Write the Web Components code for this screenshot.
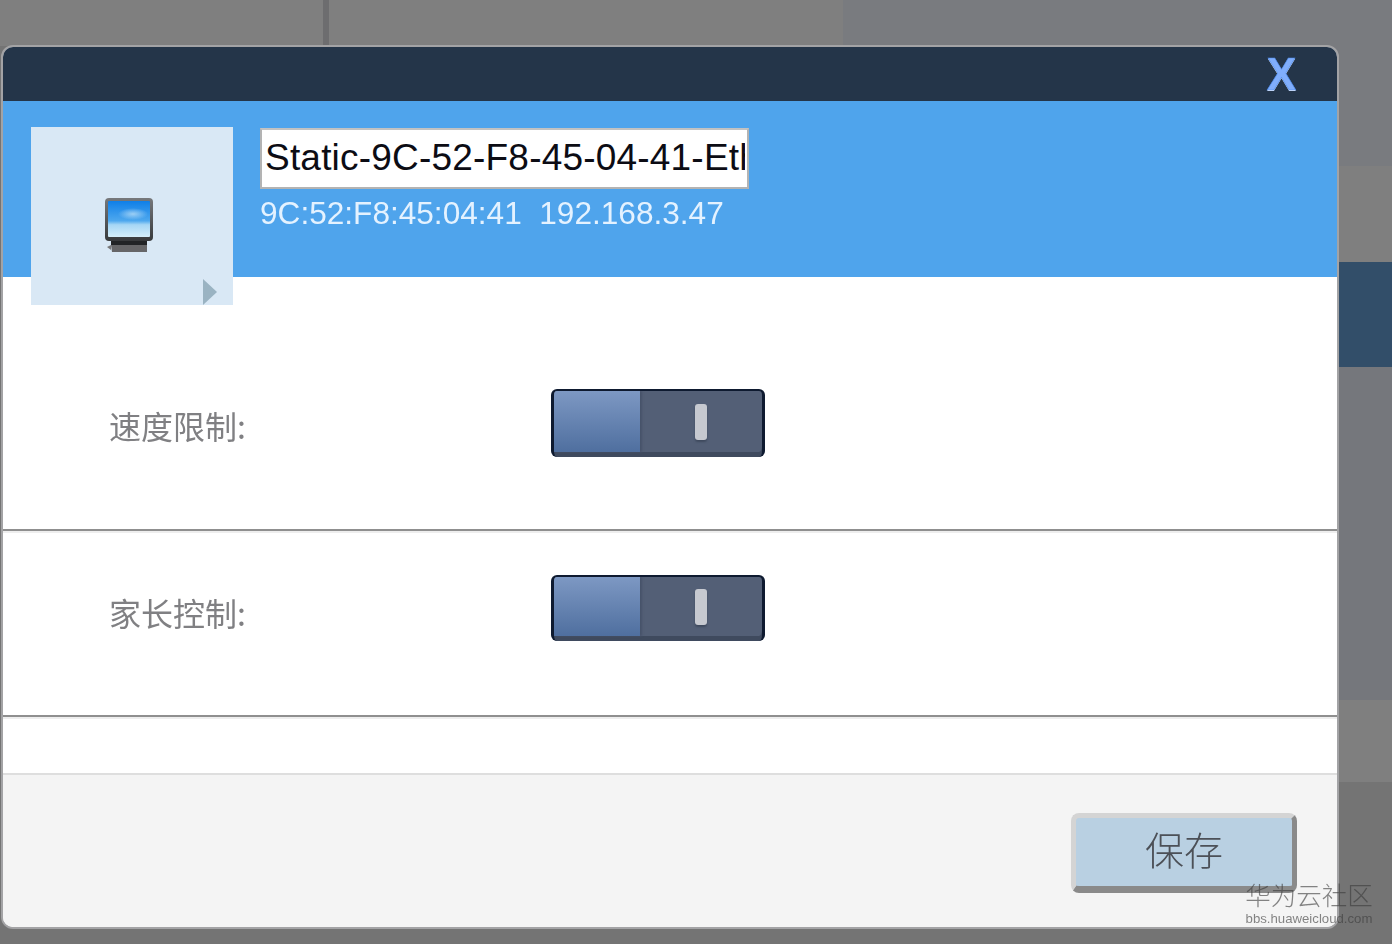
<!DOCTYPE html>
<html lang="zh"><head><meta charset="utf-8"><title>设备设置</title>
<style>
html,body{margin:0;padding:0;width:1392px;height:944px;overflow:hidden;background:#767676}
body{font-family:"Liberation Sans","Noto Sans CJK SC",sans-serif}
</style></head><body>
<template id="t-backdrop"><style>
:host{display:grid;grid-template-columns:323px 6px 514px 1fr;width:1392px;height:944px;background:#747474}
.a,.b,.c{height:46px}
.a{background:#7f7f7f}.b{background:#6d6d6f}.c{background:#7f7f7f}
.d{display:flex;flex-direction:column}
.d>div{flex:none}
.r0{height:166px;background:#797b7f}
.r1{height:96px;background:#7f7f7f}
.r2{height:105px;background:#324e69}
.r3{height:333px;background:#75777c}
.r4{height:82px;background:#7f7f7f}
</style><div class="a"></div><div class="b"></div><div class="c"></div>
<div class="d"><div class="r0"></div><div class="r1"></div><div class="r2"></div><div class="r3"></div><div class="r4"></div></div></template>

<template id="t-dialog"><style>
:host{position:absolute;left:1px;top:45px;width:1338px;height:884px;box-sizing:border-box;border:2px solid #a3a3a5;border-radius:12px;background:#fff;display:flex;flex-direction:column;overflow:hidden;filter:blur(.55px)}
</style><slot></slot></template>

<template id="t-titlebar"><style>
:host{display:flex;justify-content:flex-end;align-items:center;height:54px;background:#243549;flex:none;padding-right:42px;box-sizing:border-box}
.x{font:bold 47px/54px "Liberation Sans",sans-serif;color:#80aefc;-webkit-text-stroke:.6px #4f8cec;text-shadow:0 1px 0 #e6eefc;transform:scaleX(.94);display:block;width:29px;text-align:center}
</style><span class="x">X</span></template>

<template id="t-hostband"><style>
:host{display:flex;height:176px;background:#4fa4ec;flex:none;padding:26px 0 0 28px;box-sizing:border-box;gap:27px;align-items:flex-start;overflow:visible}
.av{position:relative;z-index:2;width:202px;height:178px;background:#d9e8f5;flex:none;display:grid;place-items:center}
.av svg.pc{width:52px;height:58px;margin:20px 6px 0 0}
.arrow{position:absolute;right:16px;bottom:0;width:14px;height:26px}
.tx{display:flex;flex-direction:column;padding-top:1px}
.inp{width:489px;height:61px;box-sizing:border-box;border:2px solid #b3b3b3;border-top-color:#c2c2c2;background:#fff;color:#0c0c14;font-size:37px;letter-spacing:.2px;line-height:56px;padding-left:3px;padding-right:2px;overflow:hidden;white-space:nowrap}
.clip{display:block;overflow:hidden}
.sub{font-size:31.6px;line-height:40px;margin-top:4px;color:#e4f2ff;white-space:pre}
</style>
<div class="av">
<svg class="pc" viewBox="0 0 52 58"><defs><linearGradient id="s" x1="0" y1="0" x2="0" y2="1"><stop offset="0" stop-color="#0f7fe8"/><stop offset=".55" stop-color="#4ea8ee"/><stop offset=".66" stop-color="#a5d6f5"/><stop offset="1" stop-color="#d5eefa"/></linearGradient><linearGradient id="b" x1="0" y1="0" x2="0" y2="1"><stop offset="0" stop-color="#77797c"/><stop offset="1" stop-color="#37393b"/></linearGradient><radialGradient id="g"><stop offset="0" stop-color="#b5dcf7" stop-opacity=".8"/><stop offset="1" stop-color="#b5dcf7" stop-opacity="0"/></radialGradient></defs>
<rect x="2" y="1" width="48" height="43" rx="4" fill="url(#b)"/><rect x="5" y="4" width="42" height="36" rx="1" fill="url(#s)"/><ellipse cx="30" cy="17" rx="15" ry="6" fill="url(#g)"/>
<path d="M8 44h36v4H8z" fill="#222426"/><path d="M8 48h36v7H9z" fill="#666668"/><path d="M4 50l4-2v5z" fill="#777779"/></svg>
<svg class="arrow" viewBox="0 0 14 26"><path d="M0 0 14 13 0 26z" fill="#9ab3c2"/></svg>
</div>
<div class="tx"><div class="inp"><span class="clip"><slot name="name"></slot></span></div><div class="sub"><slot name="sub"></slot></div></div></template>

<template id="t-row"><style>
:host{display:flex;align-items:center;box-sizing:border-box;flex:none;height:var(--h);border-bottom:2px solid #8f8f8f;position:relative;padding-left:106px}
:host::after{content:"";position:absolute;left:0;right:0;bottom:-4px;height:2px;background:#eee}
.l{width:442px;flex:none;font-size:32px;line-height:40px;color:#808083;font-family:"Noto Sans CJK SC",sans-serif;font-weight:400;position:relative;top:var(--lt)}
</style><div class="l"><slot name="label"></slot></div><slot></slot></template>

<template id="t-toggle"><style>
:host{display:flex;width:214px;height:var(--th);box-sizing:border-box;border-radius:6px;background:#535f76;border:solid #0e1a30;border-width:2px 3px 0;box-shadow:inset 0 -5px 0 #3f4a5e;overflow:hidden;position:relative;top:var(--tt)}
.on{width:86px;height:calc(100% - 5px);background:linear-gradient(#7d98c3,#4f6f9f);box-shadow:2px 0 2px #47536a}
.k{flex:1;display:grid;place-items:center;height:calc(100% - 4px)}
.k i{display:block;width:12px;height:36px;border-radius:3px;background:#c6c9d0;box-shadow:0 2px 2px #3f4a5e;margin-left:0}
</style><div class="on"></div><div class="k"><i></i></div></template>

<template id="t-footer"><style>
:host{display:flex;flex:1;justify-content:flex-end;background:#f4f4f4;border-top:2px solid #dedede;padding:38px 40px 0 0;box-sizing:border-box}
</style><slot></slot></template>

<template id="t-button"><style>
:host{display:grid;place-items:center;width:226px;height:80px;box-sizing:border-box;background:#b9d0e2;border:solid;border-width:5px 5px 7px 5px;border-color:#d4d4d4 #8a8a8a #8a8a8a #d4d4d4;border-radius:8px;color:#4c5057;font:300 39px/1 "Noto Sans CJK SC",sans-serif;padding-bottom:8px}
</style><slot></slot></template>

<template id="t-mark"><style>
:host{position:absolute;left:1245px;top:881px;width:128px;display:flex;flex-direction:column;align-items:center;color:rgba(60,60,60,.62);filter:blur(.4px)}
.a{font:300 25.5px/30px "Liberation Sans","Noto Sans CJK SC",sans-serif;white-space:nowrap}
.b{font:13.2px/15px "Liberation Sans",sans-serif;white-space:nowrap}
</style><div class="a">华为云社区</div><div class="b">bbs.huaweicloud.com</div></template>

<x-backdrop></x-backdrop>
<x-dialog>
<x-titlebar></x-titlebar>
<x-hostband><span slot="name">Static-9C-52-F8-45-04-41-Ethernet</span><span slot="sub">9C:52:F8:45:04:41  192.168.3.47</span></x-hostband>
<x-row style="--h:254px;--lt:22px;--tt:20px;--th:68px"><span slot="label">速度限制:</span><x-toggle></x-toggle></x-row>
<x-row style="--h:186px;--lt:-11px;--tt:-15px;--th:66px"><span slot="label">家长控制:</span><x-toggle></x-toggle></x-row>
<div style="height:56px;flex:none"></div>
<x-footer><x-button>保存</x-button></x-footer>
</x-dialog>
<x-mark></x-mark>
<script>
for (const [tag,id] of [['x-backdrop','t-backdrop'],['x-dialog','t-dialog'],['x-titlebar','t-titlebar'],['x-hostband','t-hostband'],['x-row','t-row'],['x-toggle','t-toggle'],['x-footer','t-footer'],['x-button','t-button'],['x-mark','t-mark']]) {
  customElements.define(tag, class extends HTMLElement {
    constructor(){super();this.attachShadow({mode:'open'}).appendChild(document.getElementById(id).content.cloneNode(true));}
  });
}
</script>
</body></html>
